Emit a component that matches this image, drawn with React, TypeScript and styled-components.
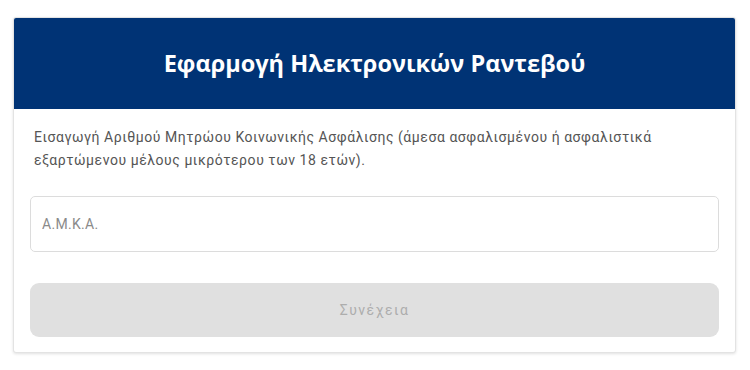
import React from "react"
import styled, { createGlobalStyle } from 'styled-components'

const GlobalStyle = createGlobalStyle`
    body {
        margin: 0;
        background: #ffffff;
        font-family: Roboto, "Noto Sans", sans-serif;
    }
`

const Page = styled.div`
    padding: 17px 14px 17px 13px;
`

const Card = styled.div`
    background: #fff;
    border: 1px solid #e3e3e3;
    border-radius: 3px;
    box-shadow: 0 1px 3px rgba(0, 0, 0, 0.12);
    overflow: hidden;
`

const Header = styled.div`
    height: 92px;
    margin: -1px -1px 0 -1px;
    background: #003375;
    display: flex;
    align-items: center;
    justify-content: center;
`

const Title = styled.h1`
    margin: 0;
    color: #fff;
    font-family: "Open Sans", Roboto, sans-serif;
    font-size: 23.5px;
    font-weight: 700;
`

const Body = styled.div`
    padding: 17px 16px 15px 16px;
    display: flex;
    flex-direction: column;
`

const Description = styled.p`
    margin: 0 0 24px 4px;
    font-size: 14px;
    line-height: 23px;
    letter-spacing: 0.55px;
    color: #555;
`

const Input = styled.input`
    height: 56px;
    box-sizing: border-box;
    border: 1px solid #dcdcdc;
    border-radius: 5px;
    padding: 0 11px;
    font-family: Roboto, sans-serif;
    font-size: 14px;
    letter-spacing: 0.3px;
    color: #333;
    outline: none;
    &::placeholder {
        color: #8a8a8a;
    }
`

const Button = styled.button`
    margin-top: 31px;
    height: 54px;
    border: none;
    border-radius: 9px;
    background: #e0e0e0;
    color: #adadad;
    font-family: Roboto, sans-serif;
    font-size: 14px;
    font-weight: 400;
    letter-spacing: 1.5px;
`

export default function App() {
    return (
        <Page>
            <GlobalStyle />
            <Card>
                <Header>
                    <Title>Εφαρμογή Ηλεκτρονικών Ραντεβού</Title>
                </Header>
                <Body>
                    <Description>
                        Εισαγωγή Αριθμού Μητρώου Κοινωνικής Ασφάλισης (άμεσα ασφαλισμένου ή ασφαλιστικά εξαρτώμενου μέλους μικρότερου των 18 ετών).
                    </Description>
                    <Input placeholder="Α.Μ.Κ.Α." />
                    <Button disabled>Συνέχεια</Button>
                </Body>
            </Card>
        </Page>
    )
}
